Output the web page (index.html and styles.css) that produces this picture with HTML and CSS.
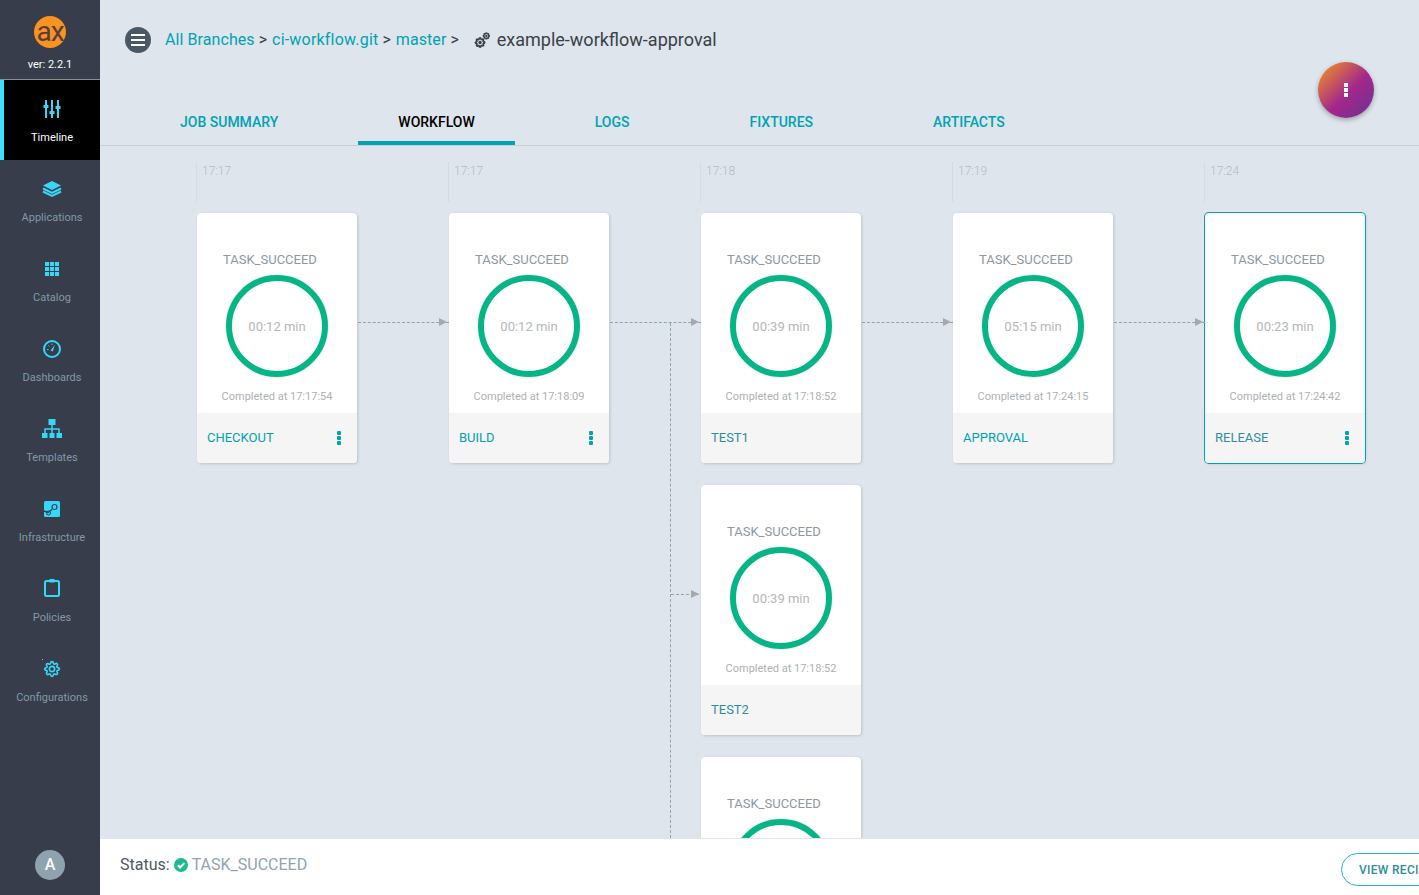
FILE: index.html
```html
<!DOCTYPE html>
<html lang="en">
<head>
<meta charset="utf-8">
<title>example-workflow-approval</title>
<link rel="stylesheet" href="styles.css">
</head>
<body>
<svg class="defs" aria-hidden="true"><defs><path id="cog" d="M19.400 15a1.650 1.650 0 0 0 .33 1.820l.06.06a2 2 0 0 1 0 2.830 2 2 0 0 1-2.830 0l-.06-.06a1.650 1.650 0 0 0-1.820-.33 1.650 1.650 0 0 0-1 1.510V21a2 2 0 0 1-2 2 2 2 0 0 1-2-2v-.09A1.650 1.650 0 0 0 9 19.400a1.650 1.650 0 0 0-1.820.33l-.06.06a2 2 0 0 1-2.830 0 2 2 0 0 1 0-2.830l.06-.06a1.650 1.650 0 0 0 .33-1.820 1.650 1.650 0 0 0-1.510-1H3a2 2 0 0 1-2-2 2 2 0 0 1 2-2h.09A1.650 1.650 0 0 0 4.600 9a1.650 1.650 0 0 0-.33-1.820l-.06-.06a2 2 0 0 1 0-2.830 2 2 0 0 1 2.830 0l.06.06a1.650 1.650 0 0 0 1.820.33H9a1.650 1.650 0 0 0 1-1.510V3a2 2 0 0 1 2-2 2 2 0 0 1 2 2v.09a1.650 1.650 0 0 0 1 1.510 1.650 1.650 0 0 0 1.820-.33l.06-.06a2 2 0 0 1 2.830 0 2 2 0 0 1 0 2.830l-.06.06a1.650 1.650 0 0 0-.33 1.820V9a1.650 1.650 0 0 0 1.510 1H21a2 2 0 0 1 2 2 2 2 0 0 1-2 2h-.09a1.650 1.650 0 0 0-1.510 1z"/></defs></svg>
<div class="app">
  <aside class="sidebar">
    <div class="brand">
      <svg class="logo" viewBox="0 0 32 32"><circle cx="16" cy="16" r="16" fill="#f7931e"/><text x="16" y="25" text-anchor="middle" class="logo-text">ax</text></svg>
      <div class="version">ver: 2.2.1</div>
    </div>
    <nav class="nav">
      <a class="nav-item active">
        <svg class="nav-icon" viewBox="0 0 24 24"><path d="M6 3v18M12 3v18M18 3v18" stroke="currentColor" stroke-width="2" fill="none"/><path d="M3.500 8h5v3h-5zM9.500 14h5v3h-5zM15.500 9h5v3h-5z" fill="currentColor"/></svg>
        <span>Timeline</span>
      </a>
      <a class="nav-item">
        <svg class="nav-icon" viewBox="0 0 24 24"><path d="M12 4l9 4.500-9 4.500-9-4.500z" fill="currentColor"/><path d="M3 11.500l9 4.500 9-4.500M3 14.500l9 4.500 9-4.500" stroke="currentColor" stroke-width="2" fill="none"/></svg>
        <span>Applications</span>
      </a>
      <a class="nav-item">
        <svg class="nav-icon" viewBox="0 0 24 24"><path d="M5 5h4v4H5zM10 5h4v4h-4zM15 5h4v4h-4zM5 10h4v4H5zM10 10h4v4h-4zM15 10h4v4h-4zM5 15h4v4H5zM10 15h4v4h-4zM15 15h4v4h-4z" fill="currentColor"/></svg>
        <span>Catalog</span>
      </a>
      <a class="nav-item">
        <svg class="nav-icon" viewBox="0 0 24 24"><circle cx="12" cy="12" r="8" stroke="currentColor" stroke-width="2" fill="none"/><path d="M10.600 13.400l4.400-6-2.200 7z" fill="currentColor"/><path d="M7 12.500h1.500M8.500 8.500l1 1M12 6.500V8" stroke="currentColor" stroke-width="1"/></svg>
        <span>Dashboards</span>
      </a>
      <a class="nav-item">
        <svg class="nav-icon" viewBox="0 0 24 24"><path d="M8.500 2h7v6h-7zM2 16h5.500v5H2zM9.500 16h5v5h-5zM16.500 16H22v5h-5.500z" fill="currentColor"/><path d="M12 8v8M5 16v-4h14v4" stroke="currentColor" stroke-width="1.500" fill="none"/></svg>
        <span>Templates</span>
      </a>
      <a class="nav-item">
        <svg class="nav-icon" viewBox="0 0 24 24"><rect x="4" y="4" width="16" height="16" rx="1.500" fill="currentColor"/><circle cx="14.500" cy="10" r="2.500" fill="none" stroke="#373d4b" stroke-width="1.200"/><path d="M4 14l4 1.500 4-3" stroke="#373d4b" stroke-width="1.400" fill="none"/><circle cx="8.500" cy="16" r="2" fill="none" stroke="#373d4b" stroke-width="1"/></svg>
        <span>Infrastructure</span>
      </a>
      <a class="nav-item">
        <svg class="nav-icon" viewBox="0 0 24 24"><rect x="5" y="4" width="14" height="15" rx="1.500" stroke="currentColor" stroke-width="2" fill="none"/><path d="M9.500 2h5v3.500h-5z" fill="currentColor"/></svg>
        <span>Policies</span>
      </a>
      <a class="nav-item">
        <svg class="nav-icon" viewBox="0 0 24 24"><g transform="translate(4 4) scale(.667)" stroke="currentColor" stroke-width="2.400" fill="none"><use href="#cog"/><circle cx="12" cy="12" r="4"/></g><rect x="2" y="2" width="1" height="1" fill="currentColor"/></svg>
        <span>Configurations</span>
      </a>
    </nav>
    <div class="avatar">A</div>
  </aside>

  <main class="main">
    <header class="header">
      <div class="crumbs">
        <button class="menu-btn" aria-label="Menu"><span></span><span></span><span></span></button>
        <a class="crumb">All Branches</a><span class="sep">&gt;</span>
        <a class="crumb crumb-repo">ci-workflow.git</a><span class="sep">&gt;</span>
        <a class="crumb">master</a><span class="sep sep-last">&gt;</span>
        <svg class="gears" viewBox="0 0 16 16"><g stroke="#3a3f48" fill="none"><g transform="translate(1 5.500) scale(.42)" stroke-width="4"><use href="#cog"/><circle cx="12" cy="12" r="2"/></g><g transform="translate(9 .5) scale(.28)" stroke-width="4.500"><use href="#cog"/><circle cx="12" cy="12" r="2"/></g></g></svg>
        <h1 class="title">example-workflow-approval</h1>
      </div>
      <div class="tabs">
        <a class="tab">JOB SUMMARY</a>
        <a class="tab active">WORKFLOW</a>
        <a class="tab">LOGS</a>
        <a class="tab">FIXTURES</a>
        <a class="tab">ARTIFACTS</a>
      </div>
      <button class="fab" aria-label="More"><i></i><i></i><i></i></button>
    </header>

    <section class="graph">
      <div class="col">
        <div class="time">17:17</div>
        <article class="card">
          <div class="card-body"><div class="state">TASK_SUCCEED</div><div class="ring">00:12 min</div><div class="done">Completed at 17:17:54</div></div>
          <div class="card-foot"><span>CHECKOUT</span><b class="kebab"><i></i><i></i><i></i></b></div>
        </article>
      </div>
      <div class="link"></div>
      <div class="col">
        <div class="time">17:17</div>
        <article class="card">
          <div class="card-body"><div class="state">TASK_SUCCEED</div><div class="ring">00:12 min</div><div class="done">Completed at 17:18:09</div></div>
          <div class="card-foot"><span>BUILD</span><b class="kebab"><i></i><i></i><i></i></b></div>
        </article>
      </div>
      <div class="link"><div class="drop"></div><div class="branch"></div></div>
      <div class="col">
        <div class="time">17:18</div>
        <article class="card">
          <div class="card-body"><div class="state">TASK_SUCCEED</div><div class="ring">00:39 min</div><div class="done">Completed at 17:18:52</div></div>
          <div class="card-foot dark"><span>TEST1</span></div>
        </article>
        <article class="card">
          <div class="card-body"><div class="state">TASK_SUCCEED</div><div class="ring">00:39 min</div><div class="done">Completed at 17:18:52</div></div>
          <div class="card-foot dark"><span>TEST2</span></div>
        </article>
        <article class="card">
          <div class="card-body"><div class="state">TASK_SUCCEED</div><div class="ring">00:39 min</div><div class="done">Completed at 17:18:52</div></div>
          <div class="card-foot dark"><span>TEST3</span></div>
        </article>
      </div>
      <div class="link"></div>
      <div class="col">
        <div class="time">17:19</div>
        <article class="card">
          <div class="card-body"><div class="state">TASK_SUCCEED</div><div class="ring">05:15 min</div><div class="done">Completed at 17:24:15</div></div>
          <div class="card-foot"><span>APPROVAL</span></div>
        </article>
      </div>
      <div class="link"></div>
      <div class="col">
        <div class="time">17:24</div>
        <article class="card selected">
          <div class="card-body"><div class="state">TASK_SUCCEED</div><div class="ring">00:23 min</div><div class="done">Completed at 17:24:42</div></div>
          <div class="card-foot dark"><span>RELEASE</span><b class="kebab"><i></i><i></i><i></i></b></div>
        </article>
      </div>
    </section>

    <footer class="statusbar">
      <div class="status">
        <span class="status-label">Status:</span>
        <svg class="check" viewBox="0 0 14 14"><circle cx="7" cy="7" r="7" fill="#1cba8e"/><path d="M3.800 7.200l2.300 2.300 4.200-4.400" stroke="#fff" stroke-width="2" fill="none"/></svg>
        <span class="status-value">TASK_SUCCEED</span>
      </div>
      <button class="view-btn">VIEW RECIPE</button>
    </footer>
  </main>
</div>
</body>
</html>
```
FILE: styles.css
```css
* { box-sizing: border-box; }
html, body { height: 100%; margin: 0; overflow: hidden; }
body { font-family: Roboto, "Liberation Sans", sans-serif; background: #dee5ec; color: #3a3f48; }
.defs { display: none; }
.app { display: flex; height: 895px; width: 1419px; overflow: hidden; }

/* sidebar */
.sidebar { width: 100px; flex: none; background: #373d4b; display: flex; flex-direction: column; }
.brand { height: 80px; padding-top: 16px; border-bottom: 1px solid #8b8f96; display: flex; flex-direction: column; align-items: center; }
.logo { width: 32px; height: 32px; }
.logo-text { font-family: Roboto, sans-serif; font-size: 28px; font-weight: 400; fill: #5a3a42; letter-spacing: -1px; }
.version { font-size: 11px; line-height: 13px; margin-top: 10px; color: #fff; }
.nav { display: flex; flex-direction: column; flex: 1; }
.nav-item { height: 80px; padding-top: 17px; border-left: 4px solid transparent; display: flex; flex-direction: column; align-items: center; font-size: 11px; line-height: 13px; color: #8398a8; }
.nav-item span { margin-top: 10px; }
.nav-icon { width: 24px; height: 24px; color: #36d8f7; }
.nav-item.active { background: #000; color: #fff; border-left-color: #3de0ff; }
.avatar { width: 30px; height: 30px; border-radius: 50%; background: #8fa3ae; color: #fff; font-size: 16px; font-weight: 500; line-height: 30px; text-align: center; margin: 0 0 15px 35px; }

/* main */
.main { flex: 1; min-width: 0; display: flex; flex-direction: column; position: relative; }
.header { height: 146px; flex: none; border-bottom: 1px solid #c9d0d4; display: flex; flex-direction: column; padding-left: 25px; }
.crumbs { height: 96px; padding-bottom: 17px; display: flex; align-items: center; font-size: 16px; }
.menu-btn { width: 26px; height: 26px; border: 0; border-radius: 50%; background: #4a5764; padding: 0 6px; margin-right: 14px; display: flex; flex-direction: column; justify-content: center; gap: 3px; }
.menu-btn span { display: block; height: 2px; background: #fff; }
.crumb { color: #00a2b3; letter-spacing: .08px; }
.crumb-repo { letter-spacing: .2px; }
.sep { color: #3a3f48; margin: 0 5px 0 4px; }
.sep-last { margin-right: 15px; }
.gears { width: 16px; height: 16px; margin-right: 7px; }
.title { margin: 0; font-size: 18px; line-height: 21px; font-weight: 400; color: #3a3f48; }
.tabs { display: flex; gap: 40px; padding-left: 15px; flex: 1; }
.tab { padding: 19px 40px 0; height: 49px; line-height: 14px; font-size: 14px; font-weight: 500; color: #00a2b3; border-bottom: 4px solid transparent; }
.tab.active { color: #000; border-bottom-color: #00a2b3; }
.fab { position: absolute; top: 62px; right: 45px; width: 56px; height: 56px; border: 0; border-radius: 50%; padding: 0; background: linear-gradient(135deg, #ea8a2c 8%, #a3278a 55%, #6d3391 95%); box-shadow: 0 2px 5px rgba(0, 0, 0, .3); display: flex; flex-direction: column; align-items: center; justify-content: center; gap: 1px; }
.fab i { width: 4px; height: 4px; background: #fff; }

/* graph */
.graph { flex: 1; min-height: 0; overflow: hidden; display: flex; padding: 16px 0 0 97px; }
.col { width: 160px; flex: none; display: flex; flex-direction: column; gap: 22px; }
.time { height: 40px; flex: none; margin: 0 0 -11px -1px; border-left: 1px solid #d5dbe0; padding: 2px 0 0 5px; font-size: 12px; line-height: 14px; font-weight: 300; color: #b4babf; }
.card { width: 160px; height: 250px; flex: none; background: #fff; border-radius: 4px; box-shadow: 1px 1px 3px rgba(0, 0, 0, .15); overflow: hidden; display: flex; flex-direction: column; }
.card.selected { box-shadow: 0 0 0 1px #00a2b3, 1px 1px 3px rgba(0, 0, 0, .15); }
.card-body { height: 200px; flex: none; display: flex; flex-direction: column; padding-top: 39px; }
.state { padding-left: 26px; font-size: 13px; line-height: 15px; color: #8c98a4; }
.ring { width: 102px; height: 102px; margin: 8px auto 0; border: 6px solid #06b586; border-radius: 50%; box-shadow: 0 0 2px rgba(0, 0, 0, .2); display: flex; align-items: center; justify-content: center; font-size: 13px; color: #b3b7ba; }
.done { margin-top: 13px; text-align: center; font-size: 11px; line-height: 13px; color: #aeb1b4; }
.card-foot { flex: 1; background: #f5f5f5; display: flex; align-items: center; justify-content: space-between; padding: 0 16px 0 10px; font-size: 13px; color: #00a2b3; }
.card-foot span { margin-bottom: 2px; }
.card-foot.dark { color: #2f8da0; }
.kebab { display: flex; flex-direction: column; gap: 1px; }
.kebab i { width: 4px; height: 4px; border-radius: 1px; background: #00a2b3; }

/* connectors */
.link { width: 91px; margin-left: 1px; flex: none; height: 0; margin-top: 160px; position: relative; border-top: 1px dashed #8fa4ad; }
.link::after { content: ""; position: absolute; right: 2px; top: -5px; border-left: 8px solid #a7a9ab; border-top: 4px solid transparent; border-bottom: 4px solid transparent; }
.drop { position: absolute; left: 60px; top: 0; height: 520px; border-left: 1px dashed #8fa4ad; }
.branch { position: absolute; left: 61px; top: 271px; width: 28px; border-top: 1px dashed #8fa4ad; }
.branch::after { content: ""; position: absolute; right: 0; top: -5px; border-left: 8px solid #a7a9ab; border-top: 4px solid transparent; border-bottom: 4px solid transparent; }

/* status bar */
.statusbar { height: 57px; flex: none; background: #fff; border-top: 1px solid #e3e6e9; display: flex; align-items: center; justify-content: space-between; padding: 0 0 0 20px; position: relative; overflow: hidden; }
.status { display: flex; align-items: center; font-size: 16px; margin-top: -5px; }
.status-label { color: #4a5a66; }
.check { width: 14px; height: 14px; margin: 0 4px; }
.status-value { color: #8fa3b5; }
.view-btn { flex: none; width: 130px; height: 33px; margin: 4px -52px 0 0; background: #fff; border: 1px solid #1ab5c7; border-radius: 17px; padding: 1px 0 0 17px; text-align: left; font-family: inherit; font-size: 12px; font-weight: 500; letter-spacing: .3px; color: #2f8da0; }
```
